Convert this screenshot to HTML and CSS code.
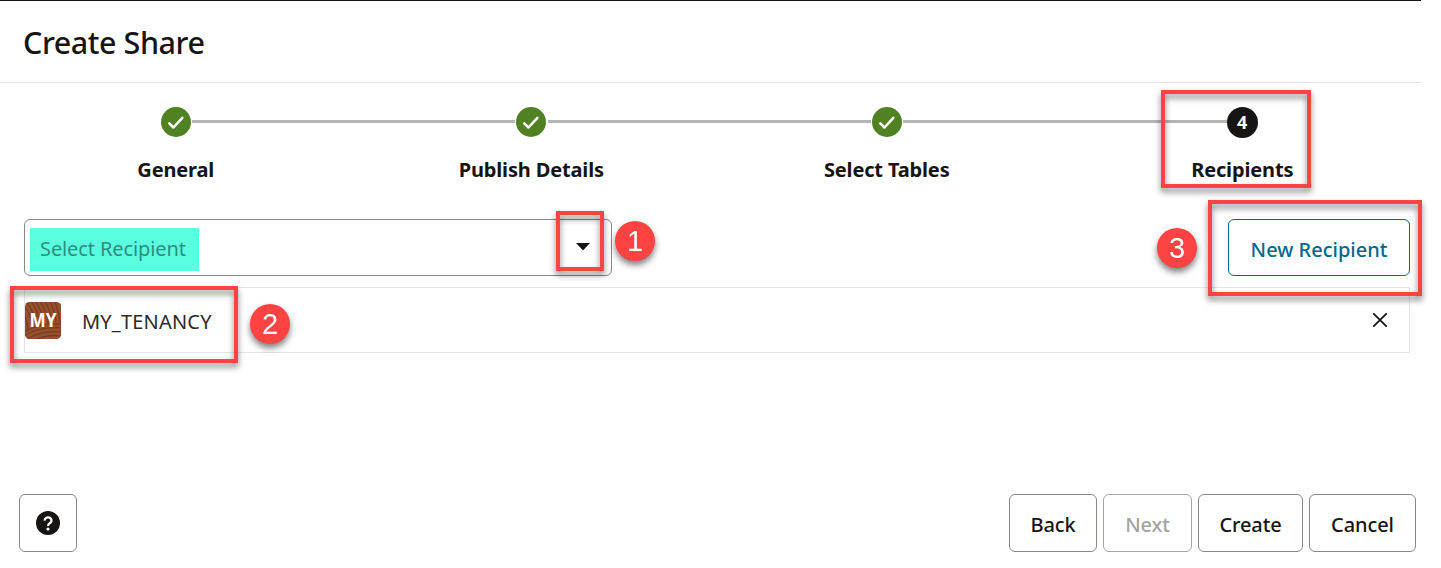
FILE: index.html
```html
<!DOCTYPE html>
<html lang="en">
<head>
<meta charset="utf-8">
<title>Create Share</title>
<link rel="stylesheet" href="styles.css">
</head>
<body>
<div class="dialog">
  <header class="header"><h1 class="title">Create Share</h1></header>
  <ol class="train">
    <li class="step"><span class="dot"><svg class="check" viewBox="0 0 30 30"><path d="M8.3 16.4l4.1 4.1 9-9.6"/></svg></span><span class="label">General</span></li>
    <li class="step"><span class="dot"><svg class="check" viewBox="0 0 30 30"><path d="M8.3 16.4l4.1 4.1 9-9.6"/></svg></span><span class="label">Publish Details</span></li>
    <li class="step"><span class="dot"><svg class="check" viewBox="0 0 30 30"><path d="M8.3 16.4l4.1 4.1 9-9.6"/></svg></span><span class="label">Select Tables</span></li>
    <li class="step"><span class="dot current">4</span><span class="label">Recipients</span></li>
  </ol>
  <main class="content">
    <div class="toolbar">
      <div class="select"><span class="placeholder"><span>Select Recipient</span></span><svg class="caret" viewBox="0 0 14 8"><path d="M0 0h14L7 7.5z"/></svg></div>
      <button class="button primary"><span>New Recipient</span></button>
    </div>
    <div class="recipient">
      <svg class="avatar" viewBox="0 0 36 37">
        <defs><clipPath id="tile"><rect width="36" height="37" rx="4.5"/></clipPath></defs>
        <g clip-path="url(#tile)">
          <rect width="36" height="37" fill="#97502d"/>
          <g class="grain">
            <path d="M-1 5Q6 10 7 25M0-1Q9 7 11 24M5-2Q13 7 15 23M9-2Q17 7 19 22M14-2Q21 7 23 21M19-2Q25 6 27 21M24-2Q29 6 31 20M29-2Q33 6 35 20M34-2Q36 3 37 8M-1 12Q2 17 3 28"/>
            <path d="M-1 30Q14 21 37 22M-1 34Q15 24 37 26M2 37Q17 28 37 30M10 38Q22 32 37 34"/>
          </g>
        </g>
        <text class="initials" x="18" y="25" text-anchor="middle" textLength="27" lengthAdjust="spacingAndGlyphs">MY</text>
      </svg>
      <span class="name">MY_TENANCY</span>
      <svg class="close" viewBox="0 0 16 16"><path d="M1.3 1.3l13.4 13.4M14.7 1.3L1.3 14.7"/></svg>
    </div>
  </main>
  <footer class="footer">
    <button class="button help" aria-label="Help"><svg class="help-icon" viewBox="0 0 24 24"><circle cx="12" cy="12" r="12"/><path d="M8.7 9.6a3.4 3.1 0 1 1 5.6 2.2Q12 13.2 12 15"/><circle class="point" cx="12" cy="18" r="1.6"/></svg></button>
    <div class="actions">
      <button class="button back"><span>Back</span></button>
      <button class="button next" disabled><span>Next</span></button>
      <button class="button create"><span>Create</span></button>
      <button class="button cancel"><span>Cancel</span></button>
    </div>
  </footer>
  <div class="frame frame-step"></div>
  <div class="frame frame-caret"></div>
  <div class="frame frame-tenancy"></div>
  <div class="frame frame-new"></div>
  <div class="badge badge-1">1</div>
  <div class="badge badge-2">2</div>
  <div class="badge badge-3">3</div>
</div>
</body>
</html>
```
FILE: styles.css
```css
* { box-sizing: border-box; }
body { margin: 0; background: #fff; color: #161513; font-family: "Noto Sans", "Open Sans", sans-serif; font-size: 20px; overflow: hidden; }
.dialog { position: relative; display: flex; flex-direction: column; width: 1441px; height: 568px; }
.header { width: 1421px; height: 83px; border-top: 1px solid #161513; border-bottom: 1px solid #e4e4e4; padding: 19px 24px; }
.title { margin: 0 0 0 -1px; font-size: 30.5px; line-height: 44px; font-weight: 500; letter-spacing: -0.45px; white-space: nowrap; }
.train { display: grid; grid-template-columns: repeat(4, 355.5px); margin: 24px 0 0 -2px; padding: 0; height: 112px; list-style: none; }
.step { position: relative; display: flex; flex-direction: column; align-items: center; }
.step:not(:last-child)::after { content: ""; position: absolute; top: 13px; left: 194px; width: 323px; height: 3px; background: #b5b5b5; }
.step:nth-child(3)::after { width: 340px; }
.dot { display: grid; place-items: center; width: 30px; height: 30px; border-radius: 50%; background: #508223; z-index: 1; }
.dot.current { width: 31px; height: 31px; background: #161513; color: #fff; font-size: 18px; font-weight: 700; line-height: 31px; margin-bottom: -1px; }
.check { width: 30px; height: 30px; fill: none; stroke: #fff; stroke-width: 2.5; stroke-linecap: round; stroke-linejoin: round; }
.label { margin-top: 19px; line-height: 28px; font-weight: 700; letter-spacing: -0.15px; white-space: nowrap; }
.content { padding: 0 31px 0 24px; }
.toolbar { display: flex; justify-content: space-between; height: 57px; }
.select { display: flex; align-items: center; justify-content: space-between; width: 588px; padding: 0 21px 0 5px; border: 1px solid #8b8783; border-radius: 6px; }
.placeholder { display: flex; align-items: center; width: 169px; height: 43px; margin-top: 4px; padding: 0 0 2px 10px; background: #5affe0; color: #2a8f7d; font-weight: 400; letter-spacing: -0.1px; white-space: nowrap; }
.caret { width: 14px; height: 8px; margin-top: -2px; fill: #161513; }
.button { display: flex; align-items: center; justify-content: center; height: 58px; padding: 4px 0 0; border: 1px solid #8b8783; border-radius: 6px; background: #fff; color: #161513; font: 500 20px/28px "Noto Sans", "Open Sans", sans-serif; letter-spacing: -0.1px; white-space: nowrap; }
.primary { width: 182px; height: 57px; letter-spacing: 0; border-color: #00688c; color: #00688c; }
.recipient { display: flex; align-items: center; height: 66px; margin-top: 11px; border: 1px solid #e5e5e5; padding-right: 21px; }
.avatar { width: 36px; height: 37px; }
.grain { fill: none; stroke: #713a1f; stroke-width: 1.3; opacity: .85; }
.initials { fill: #fff; font-size: 19px; font-weight: 700; }
.name { margin: 2px 0 0 21px; font-weight: 400; letter-spacing: 0.2px; color: #2b2a28; white-space: nowrap; }
.close { width: 16px; height: 16px; margin-left: auto; fill: none; stroke: #161513; stroke-width: 1.8; }
.footer { display: flex; justify-content: space-between; margin-top: auto; padding: 0 25px 16px 19px; }
.help { width: 58px; padding: 0; }
.help-icon { width: 24px; height: 24px; fill: #161513; }
.help-icon path { fill: none; stroke: #fff; stroke-width: 2.3; }
.help-icon .point { fill: #fff; }
.actions { display: flex; gap: 6px; }
.back { width: 88px; }
.next { width: 89px; color: #a4a4a3; border-color: #a4a4a3; }
.create { width: 105px; }
.cancel { width: 107px; }
.frame { position: absolute; border: 4px solid #ff4242; filter: drop-shadow(0 4px 3px rgba(0, 0, 0, .5)); z-index: 2; }
.frame-step { left: 1161px; top: 90px; width: 150px; height: 98px; }
.frame-caret { left: 556px; top: 211px; width: 48px; height: 60px; }
.frame-tenancy { left: 10px; top: 286px; width: 228px; height: 77px; }
.frame-new { left: 1208px; top: 200px; width: 214px; height: 96px; }
.badge { position: absolute; width: 40px; height: 40px; border-radius: 50%; background: #ff4242; color: #fff; font: 29px/41px "Liberation Sans", Arial, sans-serif; text-align: center; filter: drop-shadow(0 4px 3px rgba(0, 0, 0, .5)); z-index: 3; }
.badge-1 { left: 615px; top: 221px; }
.badge-2 { left: 250px; top: 304px; }
.badge-3 { left: 1157px; top: 228px; }
```
